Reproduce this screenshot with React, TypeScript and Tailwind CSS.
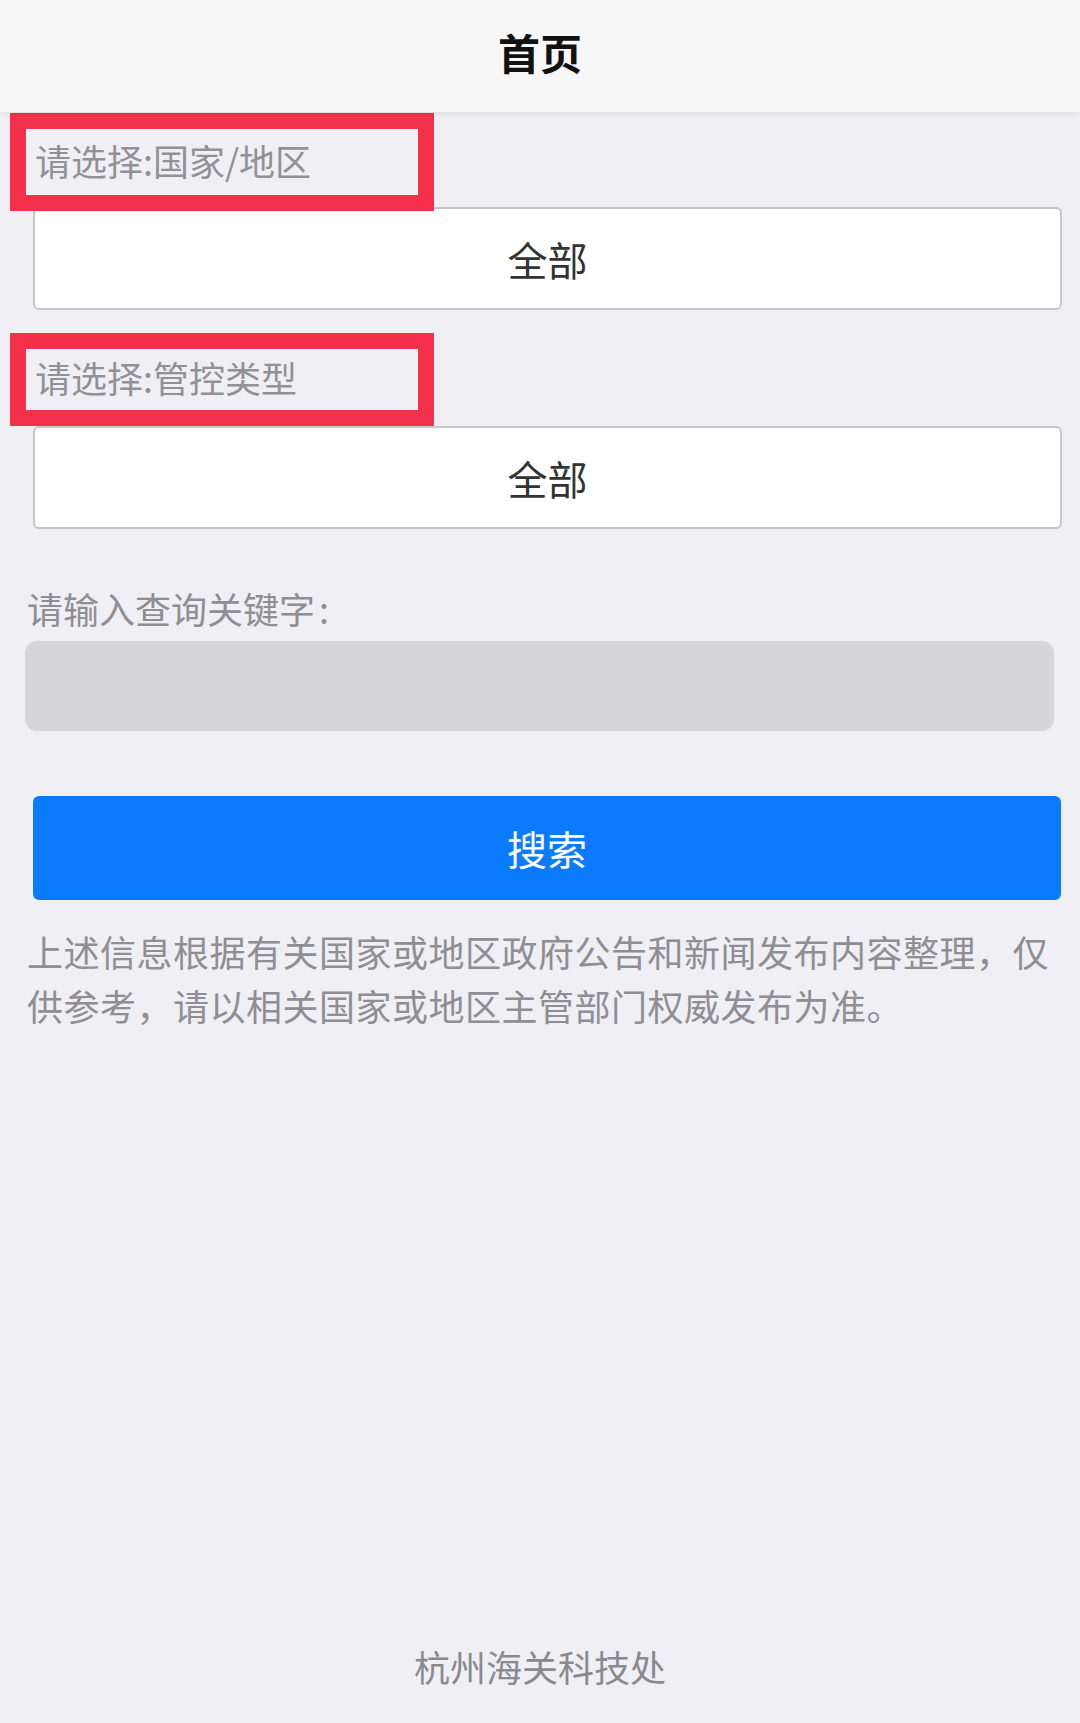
import React from "react";

const font = { fontFamily: '"Noto Sans CJK SC", "Noto Sans", sans-serif' };

function MarkedLabel({ text, tall }: { text: string; tall?: boolean }) {
  return (
    <div
      className={`relative z-10 ml-[10px] w-[424px] border-[16px] border-[#f5304a] ${
        tall ? "h-[98px]" : "h-[93px]"
      }`}
    >
      <div className="flex h-full items-center border border-white/60 pb-[5px] pl-[8px] text-[36px] leading-none text-[#919196]">
        {text}
      </div>
    </div>
  );
}

function SelectBox({ value, overlap }: { value: string; overlap?: boolean }) {
  return (
    <button
      type="button"
      className={`ml-[33px] mr-[18px] flex h-[103px] items-center justify-center rounded-[6px] border-2 border-[#c6c6c8] bg-white text-[40px] leading-none text-[#333333] ${
        overlap ? "-mt-[4px]" : ""
      }`}
    >
      {value}
    </button>
  );
}

export default function App() {
  return (
    <main
      className="flex min-h-[1723px] flex-col bg-[#efeff4]"
      style={font}
    >
      <header className="relative z-20 flex h-[112px] items-center justify-center bg-[#f7f7f7] pb-[8px] shadow-[0_2px_6px_rgba(0,0,0,0.08)]">
        <h1 className="text-[42px] font-bold leading-none text-[#111111]">首页</h1>
      </header>

      <div className="mt-[1px] flex flex-col">
        <MarkedLabel text="请选择:国家/地区" tall />
        <SelectBox value="全部" overlap />
      </div>

      <div className="mt-[23px] flex flex-col">
        <MarkedLabel text="请选择:管控类型" />
        <SelectBox value="全部" />
      </div>

      <p className="ml-[27px] mt-[59px] text-[36px] leading-[40px] text-[#8e8e93]">
        请输入查询关键字<span className="ml-[4px]">:</span>
      </p>
      <div className="ml-[25px] mr-[26px] mt-[13px] h-[90px] rounded-[12px] bg-[#d6d5da]" />

      <button
        type="button"
        className="ml-[33px] mr-[19px] mt-[65px] flex h-[104px] items-center justify-center rounded-[6px] bg-[#0a7bff] text-[40px] leading-none text-white"
      >
        搜索
      </button>

      <p className="ml-[27px] mr-[30px] mt-[24px] text-[36px] leading-[54px] tracking-[0.5px] text-[#8e8e93]">
        上述信息根据有关国家或地区政府公告和新闻发布内容整理，仅供参考，请以相关国家或地区主管部门权威发布为准。
      </p>

      <footer className="mt-auto pb-[37px] text-center text-[36px] leading-[40px] text-[#8a8a8e]">
        杭州海关科技处
      </footer>
    </main>
  );
}
